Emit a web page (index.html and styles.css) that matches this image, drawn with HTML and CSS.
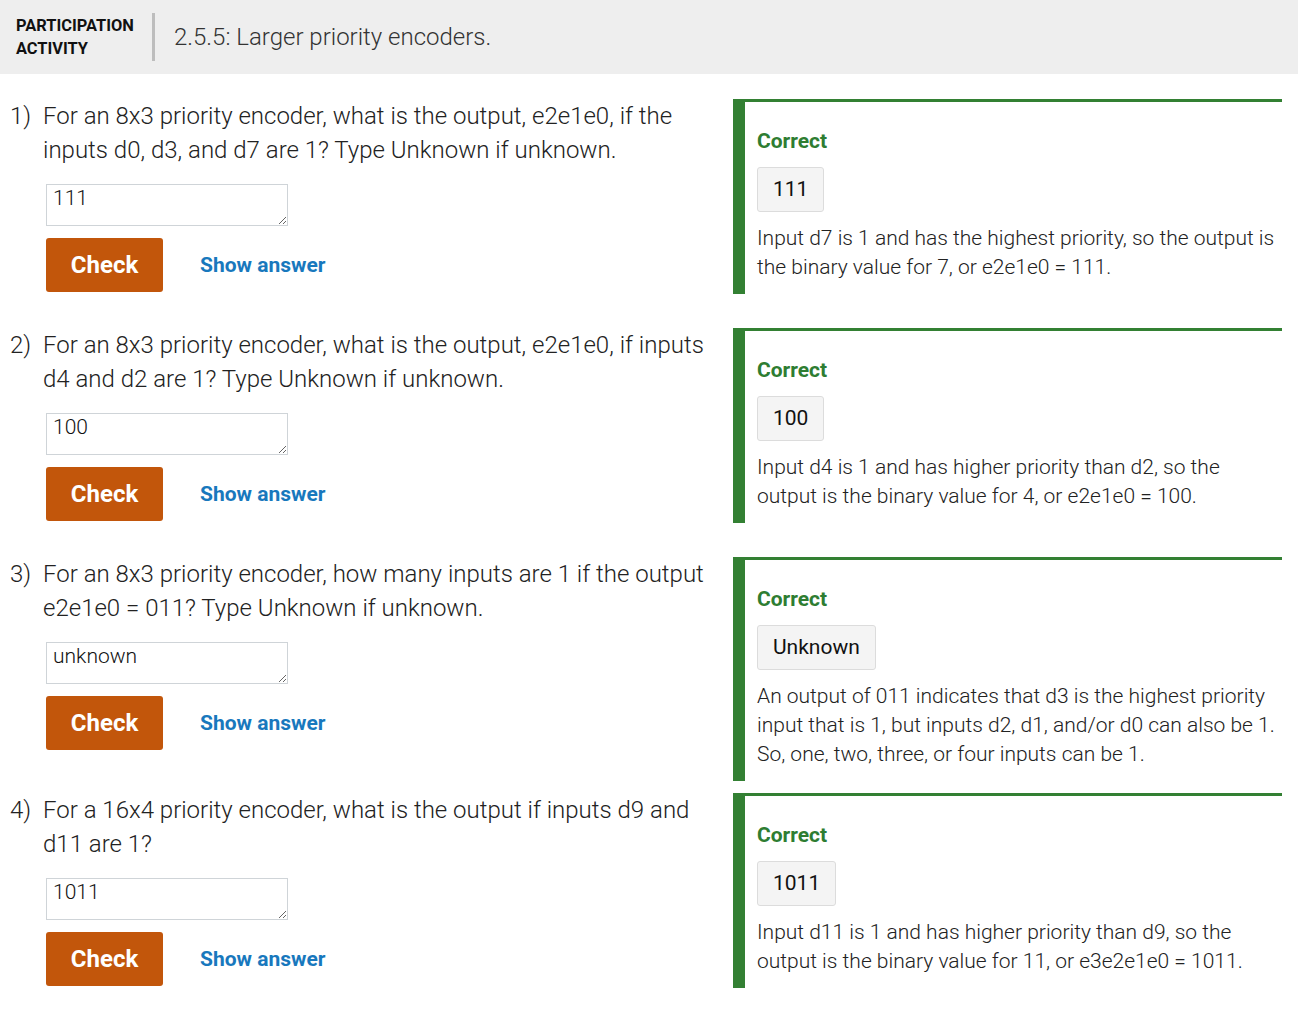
FILE: index.html
```html
<!DOCTYPE html>
<html>
<head>
<meta charset="utf-8">
<link rel="stylesheet" href="styles.css">
</head>
<body>
<div class="header">
  <div class="label">PARTICIPATION<br>ACTIVITY</div>
  <div class="divider"></div>
  <div class="title">2.5.5: Larger priority encoders.</div>
</div>
<div class="content">
  <div class="row">
    <div class="q">
      <div class="qnum">1)</div>
      <div class="qbody">
        <div class="qtext">For an 8x3 priority encoder, what is the output, e2e1e0, if the inputs d0, d3, and d7 are 1? Type Unknown if unknown.</div>
        <textarea class="answer">111</textarea>
        <div class="actions"><button class="check">Check</button><span class="show">Show answer</span></div>
      </div>
    </div>
    <div class="panel">
      <div class="correct">Correct</div>
      <div class="abox">111</div>
      <div class="explain">Input d7 is 1 and has the highest priority, so the output is the binary value for 7, or e2e1e0 = 111.</div>
    </div>
  </div>
  <div class="row">
    <div class="q">
      <div class="qnum">2)</div>
      <div class="qbody">
        <div class="qtext">For an 8x3 priority encoder, what is the output, e2e1e0, if inputs d4 and d2 are 1? Type Unknown if unknown.</div>
        <textarea class="answer">100</textarea>
        <div class="actions"><button class="check">Check</button><span class="show">Show answer</span></div>
      </div>
    </div>
    <div class="panel">
      <div class="correct">Correct</div>
      <div class="abox">100</div>
      <div class="explain">Input d4 is 1 and has higher priority than d2, so the output is the binary value for 4, or e2e1e0 = 100.</div>
    </div>
  </div>
  <div class="row">
    <div class="q">
      <div class="qnum">3)</div>
      <div class="qbody">
        <div class="qtext">For an 8x3 priority encoder, how many inputs are 1 if the output e2e1e0 = 011? Type Unknown if unknown.</div>
        <textarea class="answer">unknown</textarea>
        <div class="actions"><button class="check">Check</button><span class="show">Show answer</span></div>
      </div>
    </div>
    <div class="panel">
      <div class="correct">Correct</div>
      <div class="abox">Unknown</div>
      <div class="explain">An output of 011 indicates that d3 is the highest priority input that is 1, but inputs d2, d1, and/or d0 can also be 1. So, one, two, three, or four inputs can be 1.</div>
    </div>
  </div>
  <div class="row">
    <div class="q">
      <div class="qnum">4)</div>
      <div class="qbody">
        <div class="qtext">For a 16x4 priority encoder, what is the output if inputs d9 and d11 are 1?</div>
        <textarea class="answer">1011</textarea>
        <div class="actions"><button class="check">Check</button><span class="show">Show answer</span></div>
      </div>
    </div>
    <div class="panel">
      <div class="correct">Correct</div>
      <div class="abox">1011</div>
      <div class="explain">Input d11 is 1 and has higher priority than d9, so the output is the binary value for 11, or e3e2e1e0 = 1011.</div>
    </div>
  </div>
</div>
</body>
</html>
```
FILE: styles.css
```css
* { box-sizing: border-box; }
body {
  margin: 0;
  font-family: Roboto, "Liberation Sans", sans-serif;
  color: #222;
  background: #fff;
}
.header {
  height: 74px;
  background: #eeeeee;
  display: flex;
  align-items: center;
}
.label {
  font-weight: 700;
  font-size: 16.4px;
  line-height: 23px;
  color: #111;
  padding-left: 16px;
  width: 152px;
  margin-top: -1px;
}
.divider {
  width: 3px;
  height: 48px;
  background: #bdbdbd;
}
.title {
  margin-left: 19px;
  font-size: 24px;
  font-weight: 300;
  color: #333;
}
.content {
  padding-top: 25px;
}
.row {
  display: flex;
  align-items: flex-start;
}
.q {
  width: 715px;
  padding-left: 10px;
  padding-bottom: 36px;
  display: flex;
  font-size: 24px;
  font-weight: 300;
  line-height: 34px;
  color: #222;
}
.qnum { width: 33px; flex: none; }
.qbody { flex: 1; }
.answer {
  display: block;
  margin: 17px 0 0 3px;
  width: 242px;
  height: 42px;
  border: 1px solid #cfd4d8;
  border-radius: 0;
  padding: 1px 6px 0;
  font-family: Roboto, "Liberation Sans", sans-serif;
  font-size: 21px;
  font-weight: 300;
  line-height: 25px;
  color: #111;
  background: #fff;
}
.actions {
  display: flex;
  align-items: center;
  margin: 12px 0 0 3px;
}
.check {
  width: 117px;
  height: 54px;
  border: none;
  border-radius: 3px;
  background: #c2560b;
  color: #fff;
  font-family: Roboto, "Liberation Sans", sans-serif;
  font-weight: 700;
  font-size: 24px;
  padding: 0;
}
.show {
  margin-left: 37px;
  color: #1878bd;
  font-weight: 700;
  font-size: 21px;
  line-height: 24px;
}
.panel {
  flex: 0 0 549px;
  margin-left: 18px;
  margin-bottom: 12px;
  border-top: 3px solid #338033;
  border-left: 12px solid #338033;
  padding: 27px 6px 12px 12px;
}
.correct {
  color: #2e7d32;
  font-weight: 700;
  font-size: 21px;
  line-height: 24px;
}
.abox {
  display: inline-block;
  margin-top: 14px;
  height: 45px;
  padding: 0 15px;
  border: 1px solid #dcdcdc;
  border-radius: 3px;
  background: #f4f4f4;
  font-size: 21px;
  line-height: 43px;
  color: #111;
}
.explain {
  margin-top: 12px;
  font-size: 21px;
  font-weight: 300;
  line-height: 29px;
  color: #222;
}
```
